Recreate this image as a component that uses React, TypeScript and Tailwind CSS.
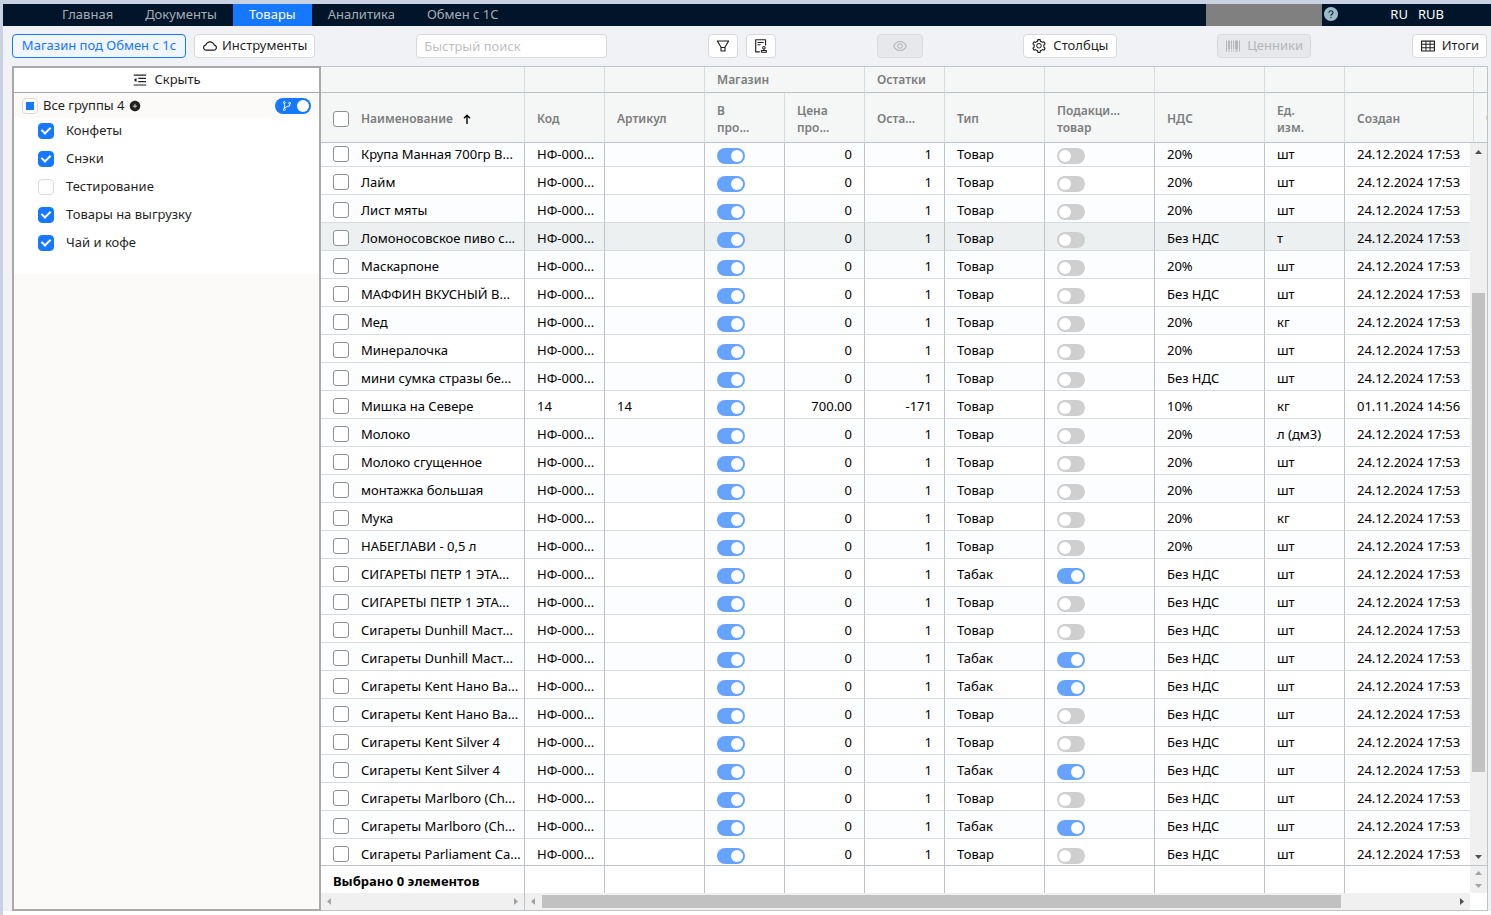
import React from 'react';
import {
  AiFillPlusCircle,
  AiFillQuestionCircle,
  AiOutlineAudit,
  AiOutlineBarcode,
  AiOutlineBranches,
  AiOutlineCloud,
  AiOutlineEye,
  AiOutlineFilter,
  AiOutlineMenuFold,
  AiOutlineSetting,
  AiOutlineTable,
} from 'react-icons/ai';
import clsx from 'clsx';

interface Product {
  name: string;
  code?: string;
  article?: string;
  price?: string;
  stock?: string;
  type?: string;
  excise?: boolean;
  vat?: string;
  unit?: string;
  created?: string;
}

const NO_VAT = 'Без НДС';

const products: Product[] = [
  { name: 'Крупа Манная 700гр В...' },
  { name: 'Лайм' },
  { name: 'Лист мяты' },
  { name: 'Ломоносовское пиво с...', vat: NO_VAT, unit: 'т' },
  { name: 'Маскарпоне' },
  { name: 'МАФФИН ВКУСНЫЙ В...', vat: NO_VAT },
  { name: 'Мед', unit: 'кг' },
  { name: 'Минералочка' },
  { name: 'мини сумка стразы бе...', vat: NO_VAT },
  {
    name: 'Мишка на Севере',
    code: '14',
    article: '14',
    price: '700.00',
    stock: '-171',
    vat: '10%',
    unit: 'кг',
    created: '01.11.2024 14:56',
  },
  { name: 'Молоко', unit: 'л (дм3)' },
  { name: 'Молоко сгущенное' },
  { name: 'монтажка большая' },
  { name: 'Мука', unit: 'кг' },
  { name: 'НАБЕГЛАВИ - 0,5 л' },
  { name: 'СИГАРЕТЫ ПЕТР 1 ЭТА...', type: 'Табак', excise: true, vat: NO_VAT },
  { name: 'СИГАРЕТЫ ПЕТР 1 ЭТА...', vat: NO_VAT },
  { name: 'Сигареты Dunhill Маст...', vat: NO_VAT },
  { name: 'Сигареты Dunhill Маст...', type: 'Табак', excise: true, vat: NO_VAT },
  { name: 'Сигареты Kent Нано Ва...', type: 'Табак', excise: true, vat: NO_VAT },
  { name: 'Сигареты Kent Нано Ва...', vat: NO_VAT },
  { name: 'Сигареты Kent Silver 4', vat: NO_VAT },
  { name: 'Сигареты Kent Silver 4', type: 'Табак', excise: true, vat: NO_VAT },
  { name: 'Сигареты Marlboro (Ch...', vat: NO_VAT },
  { name: 'Сигареты Marlboro (Ch...', type: 'Табак', excise: true, vat: NO_VAT },
  { name: 'Сигареты Parliament Ca...', vat: NO_VAT },
];

const groups = [
  { name: 'Конфеты', checked: true },
  { name: 'Снэки', checked: true },
  { name: 'Тестирование', checked: false },
  { name: 'Товары на выгрузку', checked: true },
  { name: 'Чай и кофе', checked: true },
];

const navItems = ['Главная', 'Документы', 'Товары', 'Аналитика', 'Обмен с 1С'];

const buttonBase =
  'flex h-6 items-center justify-center rounded border px-[7px] text-[13px] whitespace-nowrap';
const buttonDefault = 'border-[#d9d9d9] bg-white text-[#1f1f1f]';
const buttonDisabled = 'border-[#d9d9d9] bg-[#e6e8eb] text-[#b4b6b9]';

const gridCheckbox =
  'block size-4 shrink-0 appearance-none rounded-[3px] border border-[#8d9093] bg-white';

const Switch = ({ label, on }: { label: string; on: boolean }) => (
  <input
    type="checkbox"
    role="switch"
    aria-label={label}
    defaultChecked={on}
    className="mt-1 block h-4 w-7 appearance-none rounded-full bg-[#cfcfcf] p-0.5 before:block before:size-3 before:rounded-full before:bg-white before:content-[''] checked:bg-[#65a3ff] checked:before:ml-3"
  />
);

const Arrow = ({ dir, dark }: { dir: 'up' | 'down' | 'left' | 'right'; dark?: boolean }) => {
  const points = {
    up: '4,10 11,10 7.5,6',
    down: '4,6 11,6 7.5,10',
    left: '10,4 10,11 6,7.5',
    right: '6,4 6,11 10,7.5',
  };
  return (
    <svg viewBox="0 0 16 16" className={clsx('size-4 shrink-0', dark ? 'fill-[#505050]' : 'fill-[#a3a3a3]')}>
      <polygon points={points[dir]} />
    </svg>
  );
};

const Columns = () => (
  <colgroup>
    <col className="w-[204px]" />
    <col className="w-[80px]" />
    <col className="w-[100px]" />
    <col className="w-[80px]" />
    <col className="w-[80px]" />
    <col className="w-[80px]" />
    <col className="w-[100px]" />
    <col className="w-[110px]" />
    <col className="w-[110px]" />
    <col className="w-[80px]" />
    <col />
  </colgroup>
);

const TopBar = () => (
  <header className="flex h-[22px] items-start bg-[#001529] pl-[43px] text-[13px]">
    <nav className="flex">
      {navItems.map((item) => (
        <a
          key={item}
          href="#"
          className={clsx(
            'block h-[22px] px-4 leading-[21px]',
            item === 'Товары' ? 'bg-[#1677ff] text-white' : 'text-[#a6adb4]'
          )}
        >
          {item}
        </a>
      ))}
    </nav>
    <div className="ml-auto h-[26px] w-[116px] bg-[#808080]" />
    <AiFillQuestionCircle className="mt-0.5 ml-px size-4 text-[#9dbac8]" />
    <div className="mr-[47px] ml-[51px] flex gap-2.5 leading-[21px] text-white">
      <span>RU</span>
      <span>RUB</span>
    </div>
  </header>
);

const Toolbar = () => (
  <div className="flex h-10 items-center justify-between pr-1 pl-[9px]">
    <div className="flex gap-2">
      <button className={clsx(buttonBase, 'w-[174px] border-[#1677ff] bg-[#f1f5fc] text-[#1677ff]')}>
        Магазин под Обмен с 1с
      </button>
      <button className={clsx(buttonBase, buttonDefault, 'gap-1')}>
        <AiOutlineCloud className="size-4" />
        Инструменты
      </button>
    </div>
    <input
      type="text"
      aria-label="Быстрый поиск"
      placeholder="Быстрый поиск"
      className="h-6 w-[191px] rounded border border-[#d9d9d9] bg-white px-[7px] text-[13px] placeholder:text-[#bfbfbf]"
    />
    <div className="flex gap-2">
      <button aria-label="Фильтр" className={clsx(buttonBase, buttonDefault, 'w-[30px]')}>
        <AiOutlineFilter className="size-4 shrink-0" />
      </button>
      <button aria-label="Проверка" className={clsx(buttonBase, buttonDefault, 'w-[30px]')}>
        <AiOutlineAudit className="size-4 shrink-0" />
      </button>
    </div>
    <button disabled aria-label="Просмотр" className={clsx(buttonBase, buttonDisabled, 'w-[46px]')}>
      <AiOutlineEye className="size-4" />
    </button>
    <button className={clsx(buttonBase, buttonDefault, 'gap-1.5')}>
      <AiOutlineSetting className="size-4" />
      Столбцы
    </button>
    <button disabled className={clsx(buttonBase, buttonDisabled, 'gap-1.5')}>
      <AiOutlineBarcode className="size-4" />
      Ценники
    </button>
    <button className={clsx(buttonBase, buttonDefault, 'gap-1.5')}>
      <AiOutlineTable className="size-4" />
      Итоги
    </button>
  </div>
);

const Sidebar = () => (
  <aside className="flex w-[309px] shrink-0 flex-col border-2 border-[#a9a9a9] bg-[#fbfaf8] text-[13px] text-[#1f1f1f]">
    <button className="flex h-[25px] shrink-0 items-center justify-center gap-1.5 border-b border-[#a9a9a9] bg-white">
      <AiOutlineMenuFold className="size-4" />
      Скрыть
    </button>
    <div className="flex h-[25px] shrink-0 items-center pr-2 pl-2">
      <label className="flex items-center gap-[5px]">
        <input
          type="checkbox"
          aria-checked="mixed"
          className="grid size-4 appearance-none place-items-center rounded border border-[#d9d9d9] bg-white before:size-2 before:bg-[#1677ff] before:content-['']"
        />
        Все группы 4
      </label>
      <AiFillPlusCircle className="ml-1 size-3" />
      <label className="relative ml-auto block h-4 w-9">
        <input
          type="checkbox"
          role="switch"
          aria-label="Все группы"
          defaultChecked
          className="block h-4 w-9 appearance-none rounded-full bg-[#1677ff] p-0.5 before:ml-5 before:block before:size-3 before:rounded-full before:bg-white before:content-['']"
        />
        <AiOutlineBranches className="absolute top-0.5 left-1.5 size-3 text-white" />
      </label>
    </div>
    <ul className="bg-white pb-4">
      {groups.map((group) => (
        <li key={group.name} className="h-7 pl-6">
          <label className="flex h-[26px] items-center gap-3">
            <input
              type="checkbox"
              defaultChecked={group.checked}
              className="flex size-4 appearance-none justify-center rounded border border-[#d9d9d9] bg-white checked:border-[#1677ff] checked:bg-[#1677ff] checked:before:mt-px checked:before:h-[9px] checked:before:w-[6px] checked:before:rotate-45 checked:before:border-r-2 checked:before:border-b-2 checked:before:border-white checked:before:content-['']"
            />
            {group.name}
          </label>
        </li>
      ))}
    </ul>
  </aside>
);

const GridHeader = () => {
  const top = 'h-[26px] border-r border-b border-r-[#d9dcde] border-b-[#bdc3c7] px-3 text-left font-semibold';
  const cell = 'h-[50px] border-r border-b border-r-[#d9dcde] border-b-[#bdc3c7] px-3 pt-0.5 text-left leading-[17px] font-semibold';

  return (
    <div className="flex bg-[#f5f7f7] text-xs text-[#7b7d7d]">
      <table className="w-full table-fixed border-separate border-spacing-0 whitespace-nowrap">
        <Columns />
        <thead>
          <tr>
            <th className={clsx(top, 'border-r-[#bdc3c7]')} />
            <th className={top} />
            <th className={top} />
            <th className={top} colSpan={2}>Магазин</th>
            <th className={top}>Остатки</th>
            <th className={top} />
            <th className={top} />
            <th className={top} />
            <th className={top} />
            <th className={top} />
          </tr>
          <tr>
            <th className={clsx(cell, 'border-r-[#bdc3c7]')}>
              <label className="flex items-center gap-3">
                <input type="checkbox" className={gridCheckbox} />
                <span className="flex items-center gap-2.5">
                  Наименование
                  <svg viewBox="0 0 8 10" className="h-2.5 w-2 fill-none stroke-black stroke-[1.4]">
                    <path d="M4 10V1.2M1 4.2 4 1.2l3 3" />
                  </svg>
                </span>
              </label>
            </th>
            <th className={cell}>Код</th>
            <th className={cell}>Артикул</th>
            <th className={cell}>В<br />про...</th>
            <th className={cell}>Цена<br />про...</th>
            <th className={cell}>Оста...</th>
            <th className={cell}>Тип</th>
            <th className={cell}>Подакци...<br />товар</th>
            <th className={cell}>НДС</th>
            <th className={cell}>Ед.<br />изм.</th>
            <th className={cell}>Создан</th>
          </tr>
        </thead>
      </table>
      <div className="flex w-[13px] shrink-0 flex-col overflow-hidden">
        <div className="h-[26px] border-b border-[#bdc3c7]" />
        <div className="flex h-[50px] items-center border-b border-[#bdc3c7] pl-3 font-semibold">С</div>
      </div>
    </div>
  );
};

const ProductRow = ({ product, index }: { product: Product; index: number }) => {
  const cell = 'h-7 border-r border-b border-r-[#bdc3c7] border-b-[#d9dcde] px-3 pt-0.5';

  return (
    <tr className={index === 3 ? 'bg-[#ecf0f1]' : index % 2 === 0 ? 'bg-[#fcfdfe]' : 'bg-white'}>
      <td className={cell}>
        <label className="flex items-center gap-3">
          <input type="checkbox" className={gridCheckbox} />
          {product.name}
        </label>
      </td>
      <td className={cell}>{product.code ?? 'НФ-000...'}</td>
      <td className={cell}>{product.article}</td>
      <td className={cell}><Switch label="В продаже" on /></td>
      <td className={clsx(cell, 'text-right')}>{product.price ?? '0'}</td>
      <td className={clsx(cell, 'text-right')}>{product.stock ?? '1'}</td>
      <td className={cell}>{product.type ?? 'Товар'}</td>
      <td className={cell}><Switch label="Подакцизный товар" on={!!product.excise} /></td>
      <td className={cell}>{product.vat ?? '20%'}</td>
      <td className={cell}>{product.unit ?? 'шт'}</td>
      <td className="h-7 border-b border-[#d9dcde] pt-0.5 pl-3">{product.created ?? '24.12.2024 17:53'}</td>
    </tr>
  );
};

const GridFooter = () => (
  <div className="flex shrink-0 border-t border-[#bdc3c7]">
    <div className="min-w-0 flex-1">
      <table className="w-full table-fixed border-separate border-spacing-0">
        <Columns />
        <tbody>
          <tr>
            <td className="h-[27px] border-r border-[#bdc3c7] pt-0.5 pl-3 text-[13px] leading-5 font-bold whitespace-nowrap">
              Выбрано 0 элементов
            </td>
            {Array.from({ length: 9 }, (_, i) => (
              <td key={i} className="border-r border-[#bdc3c7]" />
            ))}
            <td />
          </tr>
        </tbody>
      </table>
      <div className="flex h-[17px] bg-[#f0f0f0]">
        <div className="flex w-[204px] items-center justify-between border-r border-[#bdc3c7]">
          <Arrow dir="left" />
          <Arrow dir="right" />
        </div>
        <div className="flex flex-1 items-center">
          <Arrow dir="left" />
          <div className="flex flex-1 pl-px">
            <div className="h-[13px] flex-[799] bg-[#c1c1c1]" />
            <div className="flex-[113]" />
          </div>
          <Arrow dir="right" dark />
        </div>
      </div>
    </div>
    <div className="w-[17px] shrink-0">
      <div className="flex h-[27px] flex-col items-center justify-center overflow-hidden bg-[#f0f0f0]">
        <div className="flex h-[13px] items-center"><Arrow dir="up" /></div>
        <div className="flex h-[13px] items-center"><Arrow dir="down" /></div>
      </div>
    </div>
  </div>
);

const ProductGrid = () => (
  <main className="flex min-w-0 flex-1 flex-col border border-l-0 border-[#bdc3c7] bg-white">
    <GridHeader />
    <div className="flex min-h-0 flex-1">
      <div className="min-w-0 flex-1 overflow-hidden">
        <table className="-mt-1 w-full table-fixed border-separate border-spacing-0 text-[13px] leading-5 whitespace-nowrap text-black">
          <Columns />
          <tbody>
            {products.map((product, index) => (
              <ProductRow key={index} product={product} index={index} />
            ))}
          </tbody>
        </table>
      </div>
      <div className="flex w-[17px] shrink-0 flex-col items-center bg-[#f0f0f0] pt-px">
        <Arrow dir="up" dark />
        <div className="flex w-[13px] flex-1 flex-col">
          <div className="flex-[133]" />
          <div className="flex-[479] bg-[#c1c1c1]" />
          <div className="flex-[77]" />
        </div>
        <Arrow dir="down" dark />
      </div>
    </div>
    <GridFooter />
  </main>
);

const App = () => {
  return (
    <div className="flex h-screen flex-col border-t-4 border-l-3 border-[#c8d2e2] bg-white pb-1 font-['Noto_Sans','Open_Sans',sans-serif]">
      <TopBar />
      <div className="flex min-h-0 flex-1 flex-col bg-[#f0f2f5]">
        <Toolbar />
        <div className="flex min-h-0 flex-1 pr-[3px] pl-[9px]">
          <Sidebar />
          <ProductGrid />
        </div>
      </div>
    </div>
  );
};

export default App;
